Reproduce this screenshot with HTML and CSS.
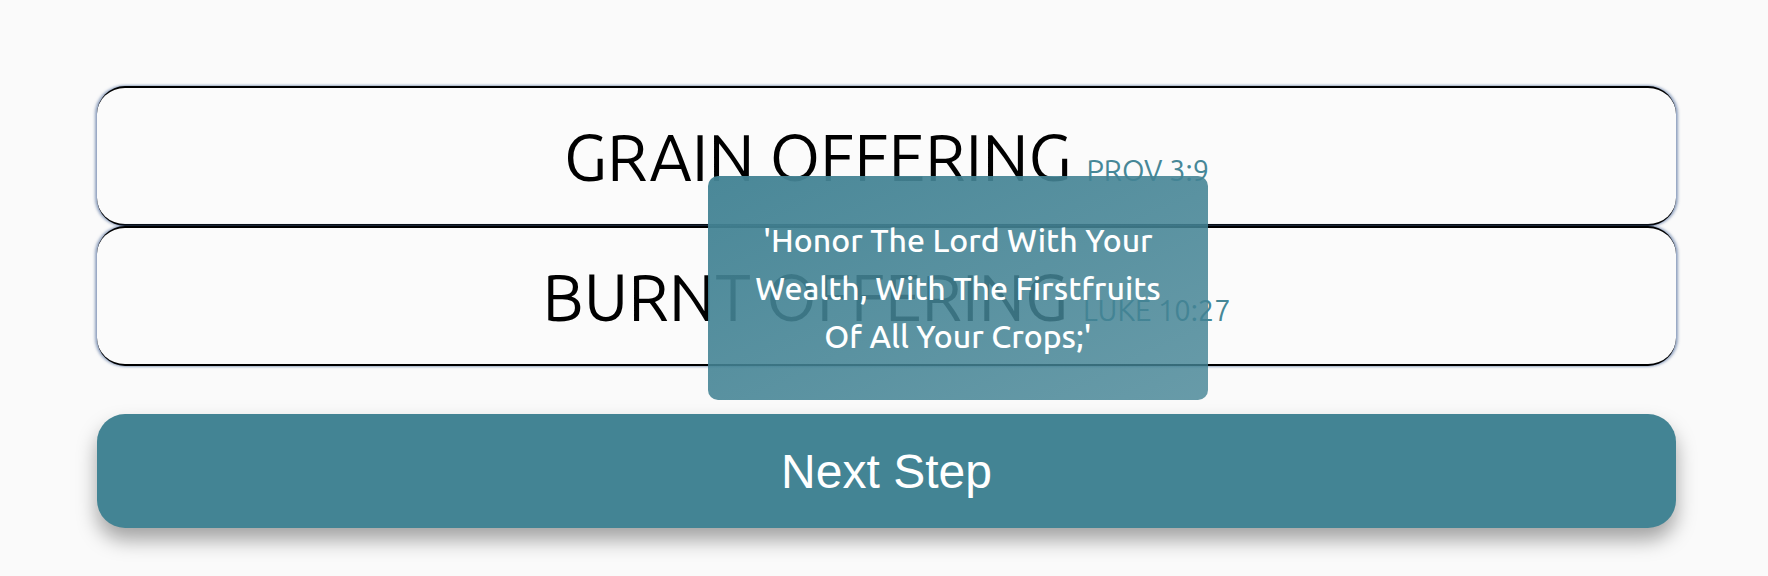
FILE: index.html
```html
<!DOCTYPE html>
<html lang="en">
<head>
<meta charset="utf-8">
<title>Offerings</title>
<link rel="stylesheet" href="styles.css">
</head>
<body>
<main class="page">
  <section class="choices">
    <div class="card">
      <span class="title">GRAIN OFFERING <span class="ref">PROV 3:9</span></span>
    </div>
    <div class="card">
      <span class="title">BURNT OFFERING <span class="ref">LUKE 10:27</span></span>
    </div>
    <div class="tooltip">'Honor The Lord With Your<br>Wealth, With The Firstfruits<br>Of All Your Crops;'</div>
  </section>
  <button class="next">Next Step</button>
</main>
</body>
</html>
```

FILE: styles.css
```css
html, body {
  margin: 0;
  padding: 0;
  background: #fafafa;
}

.page {
  width: 1579px;
  margin-left: 97px;
  padding-top: 86px;
  padding-bottom: 60px;
  display: flex;
  flex-direction: column;
}

.choices {
  position: relative;
  display: flex;
  flex-direction: column;
}

.card {
  box-sizing: border-box;
  height: 140px;
  border-top: 2px solid #000;
  border-bottom: 2px solid #000;
  border-left: 0;
  border-right: 0;
  border-radius: 28px;
  background: #fbfbfb;
  box-shadow: -2px 0 3px rgba(70, 100, 150, 0.6), 2px 0 3px rgba(70, 100, 150, 0.6);
  display: flex;
  justify-content: center;
  align-items: center;
}

.title {
  font-family: "Ubuntu", "Open Sans", "Noto Sans", sans-serif;
  font-size: 65px;
  line-height: 1;
  color: #000;
  white-space: nowrap;
}

.ref {
  font-size: 29px;
  color: #468797;
}

.tooltip {
  position: absolute;
  left: 611px;
  top: 90px;
  width: 500px;
  box-sizing: border-box;
  padding: 40px 10px;
  border-radius: 10px;
  background: linear-gradient(to bottom right, rgba(67, 131, 148, 0.96), rgba(67, 131, 148, 0.8));
  color: #fff;
  font-family: "Ubuntu", "Open Sans", "Noto Sans", sans-serif;
  font-weight: 500;
  font-size: 32px;
  line-height: 48px;
  text-align: center;
}

.next {
  margin-top: 48px;
  height: 114px;
  border: 0;
  border-radius: 28px;
  background: #438494;
  color: #fff;
  font-family: "Liberation Sans", Arial, sans-serif;
  font-size: 48px;
  box-shadow: 0 12px 20px rgba(0, 0, 0, 0.35);
  padding: 0;
}
```
